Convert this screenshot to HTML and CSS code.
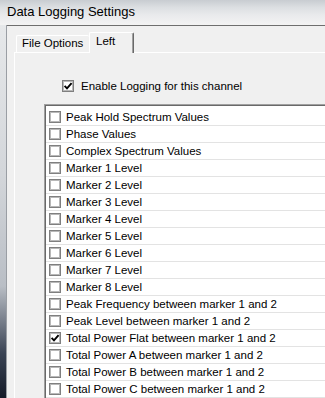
FILE: index.html
```html
<!DOCTYPE html>
<html lang="en">
<head>
  <meta charset="UTF-8">
  <title>Data Logging Settings</title>
  <link rel="stylesheet" href="styles.css">
</head>
<body>
  <div class="window">
    <div class="titlebar">Data Logging Settings</div>
    <div class="frame-body">
      <div class="frame-edge"></div>
      <div class="client">
        <div class="tabs">
          <div class="tab">File Options</div>
          <div class="tab tab-active">Left</div>
        </div>
        <div class="panel">
          <div class="enable">
            <span class="check checked"><svg viewBox="0 0 10 10"><path d="M1.6 4.8 L4 7.4 L8.6 2.2"/></svg></span>
            Enable Logging for this channel
          </div>
          <div class="list">
            <div class="item"><span class="check"></span>Peak Hold Spectrum Values</div>
            <div class="item"><span class="check"></span>Phase Values</div>
            <div class="item"><span class="check"></span>Complex Spectrum Values</div>
            <div class="item"><span class="check"></span>Marker 1 Level</div>
            <div class="item"><span class="check"></span>Marker 2 Level</div>
            <div class="item"><span class="check"></span>Marker 3 Level</div>
            <div class="item"><span class="check"></span>Marker 4 Level</div>
            <div class="item"><span class="check"></span>Marker 5 Level</div>
            <div class="item"><span class="check"></span>Marker 6 Level</div>
            <div class="item"><span class="check"></span>Marker 7 Level</div>
            <div class="item"><span class="check"></span>Marker 8 Level</div>
            <div class="item"><span class="check"></span>Peak Frequency between marker 1 and 2</div>
            <div class="item"><span class="check"></span>Peak Level between marker 1 and 2</div>
            <div class="item"><span class="check checked"><svg viewBox="0 0 10 10"><path d="M1.6 4.8 L4 7.4 L8.6 2.2"/></svg></span>Total Power Flat between marker 1 and 2</div>
            <div class="item"><span class="check"></span>Total Power A between marker 1 and 2</div>
            <div class="item"><span class="check"></span>Total Power B between marker 1 and 2</div>
            <div class="item"><span class="check"></span>Total Power C between marker 1 and 2</div>
          </div>
        </div>
      </div>
    </div>
  </div>
</body>
</html>
```

FILE: styles.css
```css
body {
  margin: 0;
  overflow: hidden;
  background-color: #f0f0f0;
  font-family: "Liberation Sans", Arial, sans-serif;
  font-size: 11.5px;
  color: #000;
}
.window {
  height: 398px;
  display: flex;
  flex-direction: column;
  overflow: hidden;
}
.titlebar {
  flex: none;
  height: 25px;
  line-height: 24px;
  padding-left: 7px;
  font-size: 13px;
  background: linear-gradient(#c8ccd1, #dcdfe2 30%, #e9eaec 60%, #f3f3f3);
}
.frame-body {
  flex: 1;
  display: flex;
  min-height: 0;
}
.frame-edge {
  width: 6px;
  border-right: 1px solid #9a9ea4;
  background: linear-gradient(#e6e8ea, #d3d6da 40%, #b9bec5 70%, #3a4354 88%, #141a28);
}
.client {
  flex: 1;
  display: flex;
  flex-direction: column;
  min-width: 0;
  border-top: 1px solid #6e6e6e;
  padding: 6px 0 0 7px;
  background-color: #f0f0f0;
}
.tabs {
  display: flex;
  align-items: flex-end;
  height: 20px;
  padding-left: 2px;
}
.tab {
  box-sizing: border-box;
  width: 73px;
  height: 17px;
  line-height: 15px;
  padding-left: 5px;
  border-top: 1px solid #fff;
  border-left: 1px solid #fff;
  border-radius: 2px 2px 0 0;
  background-color: #f0f0f0;
}
.tab-active {
  position: relative;
  z-index: 1;
  width: 45px;
  height: 21px;
  line-height: 16px;
  padding-left: 6px;
  margin-bottom: -1px;
  border-right: 1px solid #696969;
  box-shadow: inset -1px 0 0 #a0a0a0;
}
.panel {
  flex: 1;
  border-top: 1px solid #fff;
  border-left: 1px solid #fff;
}
.enable {
  display: flex;
  align-items: center;
  height: 12px;
  margin: 27px 0 0 47px;
}
.enable .check {
  margin-right: 7px;
}
.list {
  margin: 12px 0 0 29px;
  padding-top: 4px;
  border: 1px solid #a0a0a0;
  border-right: none;
  box-shadow: inset 1px 1px 0 #696969;
  background-color: #fff;
}
.item {
  display: flex;
  align-items: center;
  height: 16px;
  margin-left: 1px;
  padding-left: 3px;
  border-bottom: 1px solid #e3e3e3;
  white-space: nowrap;
}
.item .check {
  margin-right: 5px;
}
.check {
  box-sizing: border-box;
  flex: none;
  width: 12px;
  height: 12px;
  border: 1px solid #7f7f7f;
  box-shadow: inset 0 0 0 1px #b8b8b8;
  background-color: #fff;
}
.check svg {
  display: block;
  width: 10px;
  height: 10px;
}
.check path {
  fill: none;
  stroke: #000;
  stroke-width: 1.9;
}
```
